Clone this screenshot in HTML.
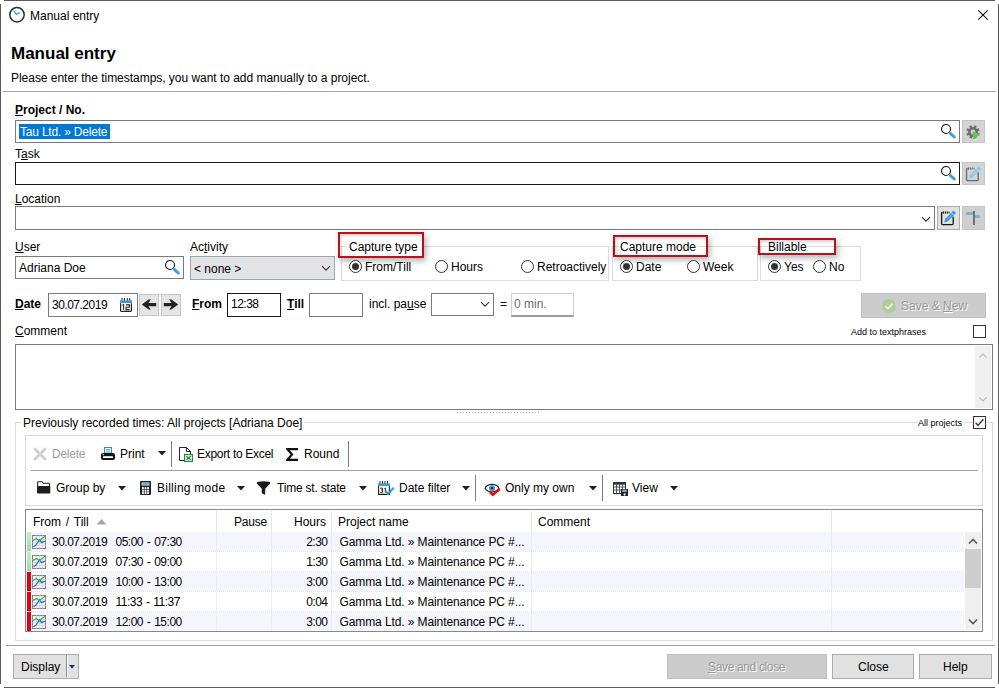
<!DOCTYPE html>
<html><head><meta charset="utf-8">
<style>
*{box-sizing:border-box;margin:0;padding:0}
html,body{width:999px;height:688px;overflow:hidden;background:#fff}
body{font-family:"Liberation Sans",sans-serif;font-size:12px;color:#000;position:relative}
.a{position:absolute}
.t{position:absolute;white-space:nowrap;line-height:14px}
.b{font-weight:bold}
u{text-decoration:underline;text-underline-offset:1px}
.inp{position:absolute;border:1px solid #7a7a7a;background:#fff}
.btn{position:absolute;border:1px solid #adadad;background:#e1e1e1}
.dis{position:absolute;border:1px solid #bfbfbf;background:#cccccc}
.grp{position:absolute;border:1px solid #dcdcdc}
.red{position:absolute;border:2px solid #b5121b;box-shadow:2px 3px 6px rgba(0,0,0,.3),inset 1px 2px 3px rgba(0,0,0,.18)}
.radio{position:absolute;width:13px;height:13px;border:1px solid #333;border-radius:50%;background:#fff}
.radio.on::after{content:"";position:absolute;left:2px;top:2px;width:7px;height:7px;border-radius:50%;background:#333}
</style></head><body>
<!-- window borders -->
<div class="a" style="left:4px;top:0;width:991px;height:1px;background:#5a5a5a"></div>
<div class="a" style="left:0;top:4px;width:1px;height:680px;background:#5a5a5a"></div>
<div class="a" style="left:998px;top:4px;width:1px;height:680px;background:#5a5a5a"></div>
<div class="a" style="left:4px;top:687px;width:991px;height:1px;background:#5a5a5a"></div>

<!-- title bar -->
<svg class="a" style="left:8px;top:6px" width="18" height="18" viewBox="0 0 18 18"><circle cx="9" cy="8.7" r="7.2" fill="none" stroke="#243238" stroke-width="1.5"/><path d="M5.6 4.6 L8.4 8.4 L11.8 6.6" fill="none" stroke="#40adb5" stroke-width="1.4"/></svg>
<div class="t" style="left:30px;top:9px">Manual entry</div>
<svg class="a" style="left:977px;top:9px" width="12" height="12" viewBox="0 0 12 12"><path d="M1.3 1.3L10.7 10.7M10.7 1.3L1.3 10.7" stroke="#111" stroke-width="1.1"/></svg>

<div class="t b" style="left:11px;top:44px;font-size:17px;line-height:19px">Manual entry</div>
<div class="t" style="left:11px;top:71px;letter-spacing:-0.03px">Please enter the timestamps, you want to add manually to a project.</div>
<div class="a" style="left:3px;top:91px;width:993px;height:1px;background:#a0a0a0"></div>

<!-- Project -->
<div class="t b" style="left:15px;top:103px"><u>P</u>roject / No.</div>
<div class="inp" style="left:15px;top:120px;width:945px;height:23px"></div>
<div class="a" style="left:19px;top:124px;width:91px;height:15px;background:#0078d7"></div>
<div class="t" style="left:20px;top:125px;color:#fff;letter-spacing:-0.2px">Tau Ltd. » Delete</div>

<!-- project buttons -->
<svg class="a" style="left:940px;top:123px" width="18" height="17" viewBox="0 0 18 17"><circle cx="6" cy="6" r="4.5" fill="none" stroke="#111" stroke-width="1.1"/><path d="M10.5 10.6 L14.3 14" stroke="#3b9ae0" stroke-width="2.9" stroke-linecap="round"/></svg>
<div class="dis" style="left:962px;top:120px;width:23px;height:23px;background:#d4d4d4;border-color:#c4c4c4"></div>
<svg class="a" style="left:962px;top:120px" width="23" height="23" viewBox="0 0 23 23"><path fill-rule="evenodd" fill="#6e6e6e" d="M11.00 7.10 L11.64 7.14 L12.38 5.24 L14.81 6.25 L13.98 8.11 L14.46 8.54 L14.89 9.02 L16.75 8.19 L17.76 10.62 L15.86 11.36 L15.90 12.00 L15.86 12.64 L17.76 13.38 L16.75 15.81 L14.89 14.98 L14.46 15.46 L13.98 15.89 L14.81 17.75 L12.38 18.76 L11.64 16.86 L11.00 16.90 L10.36 16.86 L9.62 18.76 L7.19 17.75 L8.02 15.89 L7.54 15.46 L7.11 14.98 L5.25 15.81 L4.24 13.38 L6.14 12.64 L6.10 12.00 L6.14 11.36 L4.24 10.62 L5.25 8.19 L7.11 9.02 L7.54 8.54 L8.02 8.11 L7.19 6.25 L9.62 5.24 L10.36 7.14Z M13.40 12.00 A2.4 2.4 0 1 0 8.60 12.00 A2.4 2.4 0 1 0 13.40 12.00Z"/><path d="M10.8 11 L10.8 19.2 L18.2 14.8Z" fill="#5ec95e"/></svg>

<!-- Task -->
<div class="t" style="left:15px;top:147px">T<u>a</u>sk</div>
<div class="inp" style="left:15px;top:162px;width:945px;height:23px;border-color:#1a1a1a"></div>
<svg class="a" style="left:940px;top:165px" width="18" height="17" viewBox="0 0 18 17"><circle cx="6" cy="6" r="4.5" fill="none" stroke="#111" stroke-width="1.1"/><path d="M10.5 10.6 L14.3 14" stroke="#3b9ae0" stroke-width="2.9" stroke-linecap="round"/></svg>
<div class="dis" style="left:962px;top:162px;width:23px;height:23px;background:#d4d4d4;border-color:#c4c4c4"></div>
<svg class="a" style="left:962px;top:162px" width="23" height="23" viewBox="0 0 23 23"><path d="M4.6 7 V17.8 Q4.6 18.6 5.4 18.6 H15.4 Q16.2 18.6 16.2 17.8 V10.5" fill="none" stroke="#6a6a6a" stroke-width="1.3"/><path d="M4.6 7 Q4.6 6.5 5.5 6.5" fill="none" stroke="#6a6a6a" stroke-width="1.3"/><g fill="#6a6a6a"><ellipse cx="6.4" cy="6.6" rx="0.6" ry="1.3"/><ellipse cx="8.3" cy="6.6" rx="0.6" ry="1.3"/><ellipse cx="10.2" cy="6.6" rx="0.6" ry="1.3"/><ellipse cx="12.1" cy="6.6" rx="0.55" ry="1.1"/></g><path d="M7.2 16.4L8.03 13.03L16.53 4.53L19.07 7.07L10.57 15.57Z" fill="#8cc3ea"/><path d="M10.7 12.9L14.27 9.33" stroke="#cfe5f5" stroke-width="0.9" stroke-dasharray="1 1"/><path d="M14.41 6.65L16.95 9.19" stroke="#cfe5f5" stroke-width="0.7"/></svg>

<!-- Location -->
<div class="t" style="left:15px;top:192px"><u>L</u>ocation</div>
<div class="inp" style="left:15px;top:206px;width:920px;height:24px"></div>
<svg class="a" style="left:921px;top:216px" width="10" height="7" viewBox="0 0 10 7"><path d="M1 1.2L5 5.2L9 1.2" fill="none" stroke="#333" stroke-width="1.1"/></svg>
<div class="btn" style="left:937px;top:206px;width:23px;height:24px"></div>
<svg class="a" style="left:937px;top:206px" width="23" height="23" viewBox="0 0 23 23"><path d="M4.6 7 V17.8 Q4.6 18.6 5.4 18.6 H15.4 Q16.2 18.6 16.2 17.8 V10.5" fill="none" stroke="#1a1a1a" stroke-width="1.3"/><path d="M4.6 7 Q4.6 6.5 5.5 6.5" fill="none" stroke="#1a1a1a" stroke-width="1.3"/><g fill="#1a1a1a"><ellipse cx="6.4" cy="6.6" rx="0.6" ry="1.3"/><ellipse cx="8.3" cy="6.6" rx="0.6" ry="1.3"/><ellipse cx="10.2" cy="6.6" rx="0.6" ry="1.3"/><ellipse cx="12.1" cy="6.6" rx="0.55" ry="1.1"/></g><path d="M7.2 16.4L8.03 13.03L16.53 4.53L19.07 7.07L10.57 15.57Z" fill="#3a9ad9"/><path d="M10.7 12.9L14.27 9.33" stroke="#e0f0fb" stroke-width="0.9" stroke-dasharray="1 1"/><path d="M14.41 6.65L16.95 9.19" stroke="#e0f0fb" stroke-width="0.7"/></svg>
<div class="dis" style="left:962px;top:206px;width:23px;height:24px;background:#cfcfcf;border-color:#c4c4c4"></div>
<svg class="a" style="left:962px;top:206px" width="23" height="23" viewBox="0 0 23 23"><rect x="11" y="5" width="2" height="14" fill="#707070"/><path d="M4.6 6H11V9H4.6L3.8 7.5Z" fill="#7ab3d9"/><path d="M13 9H17.4L18.2 10.5L17.4 12H13Z" fill="#7ab3d9"/></svg>

<!-- User -->
<div class="t" style="left:15px;top:240px"><u>U</u>ser</div>
<div class="inp" style="left:15px;top:256px;width:169px;height:23px"></div>
<div class="t" style="left:19px;top:261px">Adriana Doe</div>
<svg class="a" style="left:164px;top:259px" width="18" height="17" viewBox="0 0 18 17"><circle cx="6" cy="6" r="4.5" fill="none" stroke="#111" stroke-width="1.1"/><path d="M10.5 10.6 L14.3 14" stroke="#3b9ae0" stroke-width="2.9" stroke-linecap="round"/></svg>

<!-- Activity -->
<div class="t" style="left:190px;top:240px">Ac<u>t</u>ivity</div>
<div class="btn" style="left:190px;top:256px;width:145px;height:24px;background:#e3e3e6;border-color:#98a6b2"></div>
<div class="t" style="left:194px;top:262px">&lt; none &gt;</div>
<svg class="a" style="left:321px;top:265px" width="10" height="7" viewBox="0 0 10 7"><path d="M1 1.2L5 5.2L9 1.2" fill="none" stroke="#333" stroke-width="1.1"/></svg>

<!-- Capture type -->
<div class="grp" style="left:341px;top:246px;width:268px;height:35px"></div>
<div class="a" style="left:346px;top:240px;width:76px;height:12px;background:#fff"></div>
<div class="t" style="left:349px;top:240px">Capture type</div>
<div class="red" style="left:338px;top:232px;width:86px;height:26px"></div>
<div class="radio on" style="left:349px;top:260px"></div>
<div class="t" style="left:365px;top:260px">From/Till</div>
<div class="radio" style="left:435px;top:260px"></div>
<div class="t" style="left:451px;top:260px">Hours</div>
<div class="radio" style="left:521px;top:260px"></div>
<div class="t" style="left:537px;top:260px">Retroactively</div>

<!-- Capture mode -->
<div class="grp" style="left:612px;top:246px;width:146px;height:35px"></div>
<div class="t" style="left:619px;top:240px;background:#fff;padding:0 1px">Capture mode</div>
<div class="red" style="left:613px;top:235px;width:95px;height:22px"></div>
<div class="radio on" style="left:620px;top:260px"></div>
<div class="t" style="left:636px;top:260px">Date</div>
<div class="radio" style="left:687px;top:260px"></div>
<div class="t" style="left:703px;top:260px">Week</div>

<!-- Billable -->
<div class="grp" style="left:760px;top:246px;width:101px;height:35px"></div>
<div class="t" style="left:768px;top:240px;background:#fff">Billable</div>
<div class="red" style="left:758px;top:238px;width:78px;height:17px"></div>
<div class="radio on" style="left:768px;top:260px"></div>
<div class="t" style="left:784px;top:260px">Yes</div>
<div class="radio" style="left:813px;top:260px"></div>
<div class="t" style="left:829px;top:260px">No</div>

<!-- Date row -->
<div class="t b" style="left:15px;top:297px"><u>D</u>ate</div>
<div class="inp" style="left:48px;top:293px;width:90px;height:24px"></div>
<div class="t" style="left:52px;top:298px;letter-spacing:-0.5px">30.07.2019</div>
<svg class="a" style="left:120px;top:298px" width="12" height="14" viewBox="0 0 12 14"><g fill="#222"><rect x="1.5" y="0" width="1" height="3"/><rect x="4" y="0" width="1" height="3"/><rect x="6.8" y="0" width="1" height="3"/><rect x="9.3" y="0" width="1" height="3"/></g><rect x="0" y="2.4" width="12" height="2.8" fill="#3a9ad9"/><path d="M0.6 5.2V12.6Q0.6 13.4 1.4 13.4H10.6Q11.4 13.4 11.4 12.6V5.2" fill="#fff" stroke="#222" stroke-width="1.2"/><path d="M2.4 7.2L3.6 6.6V11.8M5.9 6.9H9.4V9.2H6V11.6H9.6" fill="none" stroke="#222" stroke-width="1.1"/></svg>
<div class="btn" style="left:139px;top:294px;width:20px;height:22px;background:#e5e5e5;border-color:#c4c4c4"></div>
<svg class="a" style="left:141px;top:299px" width="16" height="12" viewBox="0 0 16 12"><path d="M0.8 5.6L7.6 0.6H9.8L7.4 4H15.2V7.2H7.4L9.8 10.6H7.6Z" fill="#222"/></svg>
<div class="btn" style="left:161px;top:294px;width:20px;height:22px;background:#e5e5e5;border-color:#c4c4c4"></div>
<svg class="a" style="left:163px;top:299px" width="16" height="12" viewBox="0 0 16 12"><path d="M15.2 5.6L8.4 0.6H6.2L8.6 4H0.8V7.2H8.6L6.2 10.6H8.4Z" fill="#222"/></svg>
<div class="t b" style="left:192px;top:297px"><u>F</u>rom</div>
<div class="inp" style="left:227px;top:293px;width:54px;height:24px;border-color:#1a1a1a"></div>
<div class="t" style="left:231px;top:297px;letter-spacing:-0.5px">12:38</div>
<div class="t b" style="left:287px;top:297px"><u>T</u>ill</div>
<div class="inp" style="left:309px;top:293px;width:54px;height:24px"></div>
<div class="t" style="left:369px;top:297px">incl. pa<u>u</u>se</div>
<div class="inp" style="left:431px;top:293px;width:63px;height:23px"></div>
<svg class="a" style="left:480px;top:301px" width="10" height="7" viewBox="0 0 10 7"><path d="M1 1.2L5 5.2L9 1.2" fill="none" stroke="#333" stroke-width="1.1"/></svg>
<div class="t" style="left:500px;top:297px">=</div>
<div class="inp" style="left:511px;top:293px;width:63px;height:24px;border-color:#cfcfcf;border-bottom:2px solid #9a9a9a"></div>
<div class="t" style="left:514px;top:297px;color:#6d6d6d">0 min.</div>

<!-- Save & New -->
<div class="dis" style="left:861px;top:293px;width:125px;height:25px"></div>
<svg class="a" style="left:881px;top:298px" width="16" height="16" viewBox="0 0 16 16"><circle cx="8" cy="8" r="7" fill="#b1ca98"/><path d="M4.3 8.2L7 10.6L11.6 5.6" fill="none" stroke="#f0f0f0" stroke-width="1.6"/></svg>
<div class="t" style="left:901px;top:299px;color:#989898;text-shadow:1px 1px 0 #fff">Save &amp; <u>N</u>ew</div>

<!-- Comment -->
<div class="t" style="left:15px;top:324px"><u>C</u>omment</div>
<div class="t" style="left:851px;top:327px;font-size:9px;line-height:11px">Add to textphrases</div>
<div class="a" style="left:973px;top:325px;width:13px;height:13px;border:1px solid #333;background:#fff"></div>
<div class="inp" style="left:15px;top:344px;width:978px;height:66px"></div>
<div class="a" style="left:975px;top:346px;width:16px;height:62px;background:#f0f0f0"></div>
<svg class="a" style="left:979px;top:353px" width="8" height="5" viewBox="0 0 8 5"><path d="M0.5 4.5L4 1L7.5 4.5" fill="none" stroke="#bdbdbd" stroke-width="1.2"/></svg>
<svg class="a" style="left:979px;top:397px" width="8" height="5" viewBox="0 0 8 5"><path d="M0.5 0.5L4 4L7.5 0.5" fill="none" stroke="#bdbdbd" stroke-width="1.2"/></svg>
<div class="a" style="left:457px;top:412px;width:82px;height:1px;background:repeating-linear-gradient(90deg,#a8a8a8 0 1px,transparent 1px 3px)"></div>

<!-- Group box previously recorded -->
<div class="grp" style="left:15px;top:422px;width:978px;height:219px;border-color:#dcdcdc"></div>
<div class="t" style="left:21px;top:416px;background:#fff;padding:0 2px">Previously recorded times: All projects [Adriana Doe]</div>
<div class="t" style="left:918px;top:418px;font-size:9px;line-height:11px;background:#fff;padding:0 2px 0 0">All projects</div>
<div class="a" style="left:973px;top:416px;width:13px;height:13px;border:1px solid #333;background:#fff"></div>
<svg class="a" style="left:974px;top:417px" width="11" height="11" viewBox="0 0 11 11"><path d="M1.6 5.6L4 8.4L9.4 2.2" fill="none" stroke="#333" stroke-width="1.4"/></svg>

<!-- toolbar panel -->
<div class="a" style="left:25px;top:435px;width:958px;height:71px;border:1px solid #d9d9d9"></div>
<div class="a" style="left:31px;top:470px;width:947px;height:1px;background:#a0a0a0"></div>

<!-- toolbar row 1 -->
<svg class="a" style="left:33px;top:447px" width="14" height="14" viewBox="0 0 14 14"><path d="M2 2L12 12M12 2L2 12" stroke="#cdcdcd" stroke-width="2.6" stroke-linecap="round"/></svg>
<div class="t" style="left:52px;top:447px;color:#9c9c9c;letter-spacing:-0.25px">Delete</div>
<svg class="a" style="left:101px;top:447px" width="14" height="13" viewBox="0 0 14 13"><rect x="3.5" y="0.5" width="7" height="5.5" fill="#fff" stroke="#2a8ad8" stroke-width="1"/><path d="M5 2.4H9M5 4H9" stroke="#2a8ad8" stroke-width="0.8"/><rect x="0" y="6" width="14" height="7" rx="2" fill="#151515"/><rect x="2" y="9.2" width="10" height="1.8" fill="#fff"/><rect x="1.6" y="7.2" width="1.4" height="1" fill="#ddd"/></svg>
<div class="t" style="left:120px;top:447px">Print</div>
<svg class="a" style="left:158px;top:451px" width="9" height="5" viewBox="0 0 9 5"><path d="M0 0H8L4 4.5Z" fill="#222"/></svg>
<div class="a" style="left:171px;top:441px;width:1px;height:26px;background:#7a7a7a"></div>
<svg class="a" style="left:178px;top:446px" width="16" height="16" viewBox="0 0 16 16"><path d="M1.5 1.5H8.5L12.5 5.5V14.5H1.5Z" fill="#fff" stroke="#222" stroke-width="1"/><path d="M8.5 1.5V5.5H12.5" fill="none" stroke="#222" stroke-width="1"/><rect x="6" y="8" width="9" height="8" fill="#1f8a3b"/><rect x="7.2" y="9.2" width="6.6" height="5.6" fill="#fff"/><path d="M8.3 10.2L12.7 13.8M12.7 10.2L8.3 13.8" stroke="#1f8a3b" stroke-width="1.2"/></svg>
<div class="t" style="left:197px;top:447px;letter-spacing:-0.3px">Export to Excel</div>
<svg class="a" style="left:286px;top:448px" width="12" height="13" viewBox="0 0 12 13"><path d="M11 2.2V1.1H1.4L6 6.5L1.4 11.9H11V10.8" fill="none" stroke="#111" stroke-width="2.2" stroke-linejoin="miter"/></svg>
<div class="t" style="left:304px;top:447px">Round</div>
<div class="a" style="left:348px;top:441px;width:1px;height:26px;background:#7a7a7a"></div>

<!-- toolbar row 2 -->
<svg class="a" style="left:37px;top:481px" width="14" height="13" viewBox="0 0 14 13"><path d="M0.6 12V1.5Q0.6 0.7 1.4 0.7H5L6.4 2.3H11.8Q12.5 2.3 12.5 3V5.2" fill="#fff" stroke="#222" stroke-width="1.1"/><path d="M0.6 12.6V5.6Q0.6 4.9 1.3 4.9H12.6Q13.3 4.9 13.3 5.6V11.9Q13.3 12.6 12.6 12.6Z" fill="#1e1e1e"/></svg>
<div class="t" style="left:56px;top:481px">Group by</div>
<svg class="a" style="left:118px;top:486px" width="9" height="5" viewBox="0 0 9 5"><path d="M0 0H8L4 4.5Z" fill="#222"/></svg>
<svg class="a" style="left:140px;top:481px" width="11" height="14" viewBox="0 0 11 14"><rect x="0" y="0" width="11" height="14" rx="1" fill="#222"/><rect x="1.6" y="1.5" width="7.8" height="3" fill="#fff"/><rect x="2.2" y="2.1" width="6.6" height="1.8" fill="#5aa9e6"/><g fill="#fff"><rect x="2" y="6.1" width="1.9" height="1.9"/><rect x="4.55" y="6.1" width="1.9" height="1.9"/><rect x="7.1" y="6.1" width="1.9" height="1.9"/><rect x="2" y="8.7" width="1.9" height="1.9"/><rect x="4.55" y="8.7" width="1.9" height="1.9"/><rect x="7.1" y="8.7" width="1.9" height="1.9"/><rect x="2" y="11.1" width="1.9" height="1.9"/><rect x="4.55" y="11.1" width="1.9" height="1.9"/><rect x="7.1" y="11.1" width="1.9" height="1.9"/></g></svg>
<div class="t" style="left:157px;top:481px;letter-spacing:0.25px">Billing mode</div>
<svg class="a" style="left:237px;top:486px" width="9" height="5" viewBox="0 0 9 5"><path d="M0 0H8L4 4.5Z" fill="#222"/></svg>
<svg class="a" style="left:256px;top:481px" width="15" height="14" viewBox="0 0 15 14"><path d="M0.6 2.2Q0.6 0.3 7.5 0.3Q14.4 0.3 14.4 2.2L9.2 7.8V13.8L5.8 12.2V7.8Z" fill="#1a1a1a"/></svg>
<div class="t" style="left:277px;top:481px;letter-spacing:-0.2px">Time st. state</div>
<svg class="a" style="left:359px;top:486px" width="9" height="5" viewBox="0 0 9 5"><path d="M0 0H8L4 4.5Z" fill="#222"/></svg>
<svg class="a" style="left:377px;top:480px" width="18" height="16" viewBox="0 0 18 16"><g fill="#222"><rect x="2.5" y="1" width="1" height="3"/><rect x="5" y="1" width="1" height="3"/><rect x="7.5" y="1" width="1" height="3"/><rect x="10" y="1" width="1" height="3"/></g><rect x="1" y="3.4" width="12" height="2.6" fill="#3a9ad9"/><path d="M1.6 6V14.4H12.4V6" fill="#fff" stroke="#222" stroke-width="1.1"/><path d="M3.2 8.2H5.6V10H4.2M5.6 10V12.4H3.2M7.4 8.6L8.4 8.1V12.6" fill="none" stroke="#222" stroke-width="1"/><path d="M8.6 11.2L11.2 13.8L16.8 7.6" fill="none" stroke="#3a9ad9" stroke-width="2.1"/></svg>
<div class="t" style="left:399px;top:481px">Date filter</div>
<svg class="a" style="left:462px;top:486px" width="9" height="5" viewBox="0 0 9 5"><path d="M0 0H8L4 4.5Z" fill="#222"/></svg>
<div class="a" style="left:475px;top:475px;width:1px;height:26px;background:#7a7a7a"></div>
<svg class="a" style="left:484px;top:481px" width="18" height="16" viewBox="0 0 18 16"><path d="M1 7.2C4 2.2 12 2.2 15 7.2C12 12.2 4 12.2 1 7.2Z" fill="#fff" stroke="#222" stroke-width="1.2"/><circle cx="8" cy="7.2" r="3" fill="#3a9ad9"/><circle cx="8" cy="7.2" r="1.1" fill="#1a1a1a"/><path d="M6 11L8.8 13.8L15.8 8" fill="none" stroke="#e0101a" stroke-width="2.6"/></svg>
<div class="t" style="left:505px;top:481px">Only my own</div>
<svg class="a" style="left:589px;top:486px" width="9" height="5" viewBox="0 0 9 5"><path d="M0 0H8L4 4.5Z" fill="#222"/></svg>
<div class="a" style="left:602px;top:475px;width:1px;height:26px;background:#7a7a7a"></div>
<svg class="a" style="left:613px;top:482px" width="15" height="14" viewBox="0 0 15 14"><rect x="0.5" y="0.5" width="12" height="11" fill="#fff" stroke="#333"/><rect x="0.5" y="0.5" width="12" height="2.2" fill="#333"/><path d="M3.5 0.5V11.5M6.5 0.5V11.5M9.5 0.5V11.5M0.5 5H12.5M0.5 8H12.5" stroke="#444" stroke-width="0.9"/><rect x="8" y="7" width="7" height="7" fill="#1e1e1e"/><rect x="9.2" y="7.6" width="4.6" height="2.4" fill="#6ab0e8"/><rect x="10.6" y="11.4" width="2" height="2" fill="#fff"/></svg>
<div class="t" style="left:632px;top:481px">View</div>
<svg class="a" style="left:670px;top:486px" width="9" height="5" viewBox="0 0 9 5"><path d="M0 0H8L4 4.5Z" fill="#222"/></svg>

<!-- grid -->
<div class="a" style="left:25px;top:509px;width:958px;height:123px;border:1px solid #828790;background:#fff"></div>
<div class="t" style="left:33px;top:515px;word-spacing:1.5px">From / Till</div>
<svg class="a" style="left:96px;top:518px" width="11" height="7" viewBox="0 0 11 7"><path d="M0.5 6.5L5.5 1L10.5 6.5Z" fill="#a6a6a6"/></svg>
<div class="a" style="left:216px;top:511px;width:1px;height:21px;background:#e5e5e5"></div>
<div class="a" style="left:271px;top:511px;width:1px;height:21px;background:#e5e5e5"></div>
<div class="a" style="left:331px;top:511px;width:1px;height:21px;background:#e5e5e5"></div>
<div class="a" style="left:531px;top:511px;width:1px;height:21px;background:#e5e5e5"></div>
<div class="a" style="left:831px;top:511px;width:1px;height:21px;background:#e5e5e5"></div>
<div class="t" style="left:227px;top:515px;width:40px;text-align:right;letter-spacing:-0.2px">Pause</div>
<div class="t" style="left:286px;top:515px;width:40px;text-align:right">Hours</div>
<div class="t" style="left:338px;top:515px">Project name</div>
<div class="t" style="left:538px;top:515px">Comment</div>
<div class="a" style="left:26px;top:532px;width:938px;height:19px;background:#f5f5fd"></div>
<div class="a" style="left:26px;top:551px;width:938px;height:1px;border-top:1px dotted #e6e6e6"></div>
<div class="a" style="left:27px;top:532px;width:4px;height:19px;background:linear-gradient(180deg,#c8ecc8,#a0dca0)"></div>
<svg class="a" style="left:32px;top:535px" width="14" height="14" viewBox="0 0 14 14"><rect x="0.5" y="0.5" width="13" height="13" fill="#f4f4fa" stroke="#7c8494"/><path d="M0.5 4.5H13.5M0.5 7.5H13.5M0.5 10.5H13.5M4.5 0.5V13.5M7.5 0.5V13.5M10.5 0.5V13.5" stroke="#d0d4e0" stroke-width="0.8"/><path d="M1.3 11.6L3.5 10.6L5.5 8L7.4 4.8L9.6 7.6L13 6" fill="none" stroke="#2a6ed8" stroke-width="1.3"/><path d="M1 5.6L4.5 3.4L7 5.8L10 3.6L13.2 1" fill="none" stroke="#36b43a" stroke-width="1.2"/></svg>
<div class="t" style="left:52px;top:535px;letter-spacing:-0.5px">30.07.2019</div>
<div class="t" style="left:115.5px;top:535px;letter-spacing:-0.5px;word-spacing:1px">05:00 - 07:30</div>
<div class="t" style="left:299px;top:535px;width:28.5px;text-align:right;letter-spacing:-0.5px">2:30</div>
<div class="t" style="left:339.5px;top:535px;letter-spacing:-0.1px">Gamma Ltd. » Maintenance PC #...</div>
<div class="a" style="left:26px;top:552px;width:938px;height:19px;background:#ffffff"></div>
<div class="a" style="left:26px;top:571px;width:938px;height:1px;border-top:1px dotted #e6e6e6"></div>
<div class="a" style="left:27px;top:552px;width:4px;height:19px;background:linear-gradient(180deg,#c8ecc8,#a0dca0)"></div>
<svg class="a" style="left:32px;top:555px" width="14" height="14" viewBox="0 0 14 14"><rect x="0.5" y="0.5" width="13" height="13" fill="#f4f4fa" stroke="#7c8494"/><path d="M0.5 4.5H13.5M0.5 7.5H13.5M0.5 10.5H13.5M4.5 0.5V13.5M7.5 0.5V13.5M10.5 0.5V13.5" stroke="#d0d4e0" stroke-width="0.8"/><path d="M1.3 11.6L3.5 10.6L5.5 8L7.4 4.8L9.6 7.6L13 6" fill="none" stroke="#2a6ed8" stroke-width="1.3"/><path d="M1 5.6L4.5 3.4L7 5.8L10 3.6L13.2 1" fill="none" stroke="#36b43a" stroke-width="1.2"/></svg>
<div class="t" style="left:52px;top:555px;letter-spacing:-0.5px">30.07.2019</div>
<div class="t" style="left:115.5px;top:555px;letter-spacing:-0.5px;word-spacing:1px">07:30 - 09:00</div>
<div class="t" style="left:299px;top:555px;width:28.5px;text-align:right;letter-spacing:-0.5px">1:30</div>
<div class="t" style="left:339.5px;top:555px;letter-spacing:-0.1px">Gamma Ltd. » Maintenance PC #...</div>
<div class="a" style="left:26px;top:572px;width:938px;height:19px;background:#f5f5fd"></div>
<div class="a" style="left:26px;top:591px;width:938px;height:1px;border-top:1px dotted #e6e6e6"></div>
<div class="a" style="left:27px;top:572px;width:4px;height:19px;background:#e00010"></div>
<svg class="a" style="left:32px;top:575px" width="14" height="14" viewBox="0 0 14 14"><rect x="0.5" y="0.5" width="13" height="13" fill="#f4f4fa" stroke="#7c8494"/><path d="M0.5 4.5H13.5M0.5 7.5H13.5M0.5 10.5H13.5M4.5 0.5V13.5M7.5 0.5V13.5M10.5 0.5V13.5" stroke="#d0d4e0" stroke-width="0.8"/><path d="M1.3 11.6L3.5 10.6L5.5 8L7.4 4.8L9.6 7.6L13 6" fill="none" stroke="#2a6ed8" stroke-width="1.3"/><path d="M1 5.6L4.5 3.4L7 5.8L10 3.6L13.2 1" fill="none" stroke="#36b43a" stroke-width="1.2"/></svg>
<div class="t" style="left:52px;top:575px;letter-spacing:-0.5px">30.07.2019</div>
<div class="t" style="left:115.5px;top:575px;letter-spacing:-0.5px;word-spacing:1px">10:00 - 13:00</div>
<div class="t" style="left:299px;top:575px;width:28.5px;text-align:right;letter-spacing:-0.5px">3:00</div>
<div class="t" style="left:339.5px;top:575px;letter-spacing:-0.1px">Gamma Ltd. » Maintenance PC #...</div>
<div class="a" style="left:26px;top:592px;width:938px;height:19px;background:#ffffff"></div>
<div class="a" style="left:26px;top:611px;width:938px;height:1px;border-top:1px dotted #e6e6e6"></div>
<div class="a" style="left:27px;top:592px;width:4px;height:19px;background:#e00010"></div>
<svg class="a" style="left:32px;top:595px" width="14" height="14" viewBox="0 0 14 14"><rect x="0.5" y="0.5" width="13" height="13" fill="#f4f4fa" stroke="#7c8494"/><path d="M0.5 4.5H13.5M0.5 7.5H13.5M0.5 10.5H13.5M4.5 0.5V13.5M7.5 0.5V13.5M10.5 0.5V13.5" stroke="#d0d4e0" stroke-width="0.8"/><path d="M1.3 11.6L3.5 10.6L5.5 8L7.4 4.8L9.6 7.6L13 6" fill="none" stroke="#2a6ed8" stroke-width="1.3"/><path d="M1 5.6L4.5 3.4L7 5.8L10 3.6L13.2 1" fill="none" stroke="#36b43a" stroke-width="1.2"/></svg>
<div class="t" style="left:52px;top:595px;letter-spacing:-0.5px">30.07.2019</div>
<div class="t" style="left:115.5px;top:595px;letter-spacing:-0.5px;word-spacing:1px">11:33 - 11:37</div>
<div class="t" style="left:299px;top:595px;width:28.5px;text-align:right;letter-spacing:-0.5px">0:04</div>
<div class="t" style="left:339.5px;top:595px;letter-spacing:-0.1px">Gamma Ltd. » Maintenance PC #...</div>
<div class="a" style="left:26px;top:612px;width:938px;height:19px;background:#f5f5fd"></div>
<div class="a" style="left:27px;top:612px;width:4px;height:19px;background:#e00010"></div>
<svg class="a" style="left:32px;top:615px" width="14" height="14" viewBox="0 0 14 14"><rect x="0.5" y="0.5" width="13" height="13" fill="#f4f4fa" stroke="#7c8494"/><path d="M0.5 4.5H13.5M0.5 7.5H13.5M0.5 10.5H13.5M4.5 0.5V13.5M7.5 0.5V13.5M10.5 0.5V13.5" stroke="#d0d4e0" stroke-width="0.8"/><path d="M1.3 11.6L3.5 10.6L5.5 8L7.4 4.8L9.6 7.6L13 6" fill="none" stroke="#2a6ed8" stroke-width="1.3"/><path d="M1 5.6L4.5 3.4L7 5.8L10 3.6L13.2 1" fill="none" stroke="#36b43a" stroke-width="1.2"/></svg>
<div class="t" style="left:52px;top:615px;letter-spacing:-0.5px">30.07.2019</div>
<div class="t" style="left:115.5px;top:615px;letter-spacing:-0.5px;word-spacing:1px">12:00 - 15:00</div>
<div class="t" style="left:299px;top:615px;width:28.5px;text-align:right;letter-spacing:-0.5px">3:00</div>
<div class="t" style="left:339.5px;top:615px;letter-spacing:-0.1px">Gamma Ltd. » Maintenance PC #...</div>
<div class="a" style="left:216px;top:532px;width:1px;height:99px;border-left:1px dotted #e3e3e3"></div>
<div class="a" style="left:271px;top:532px;width:1px;height:99px;border-left:1px dotted #e3e3e3"></div>
<div class="a" style="left:331px;top:532px;width:1px;height:99px;border-left:1px dotted #e3e3e3"></div>
<div class="a" style="left:531px;top:532px;width:1px;height:99px;border-left:1px dotted #e3e3e3"></div>
<div class="a" style="left:831px;top:532px;width:1px;height:99px;border-left:1px dotted #e3e3e3"></div>

<div class="a" style="left:965px;top:532px;width:16px;height:98px;background:#f0f0f0"></div>
<div class="a" style="left:965px;top:549px;width:16px;height:39px;background:#cdcdcd"></div>
<svg class="a" style="left:968px;top:538px" width="10" height="7" viewBox="0 0 10 7"><path d="M1 5.5L5 1.5L9 5.5" fill="none" stroke="#555" stroke-width="1.6"/></svg>
<svg class="a" style="left:968px;top:618px" width="10" height="7" viewBox="0 0 10 7"><path d="M1 1.5L5 5.5L9 1.5" fill="none" stroke="#555" stroke-width="1.6"/></svg>

<!-- footer -->
<div class="a" style="left:6px;top:645px;width:989px;height:1px;background:#a0a0a0"></div>
<div class="btn" style="left:13px;top:654px;width:66px;height:25px"></div>
<div class="a" style="left:66px;top:655px;width:1px;height:22px;background:#8a8a8a"></div>
<div class="a" style="left:67px;top:655px;width:1px;height:22px;background:#fff"></div>
<div class="t" style="left:21px;top:660px">Display</div>
<svg class="a" style="left:69px;top:665px" width="7" height="4" viewBox="0 0 7 4"><path d="M0 0H6L3 3.5Z" fill="#1a237e"/></svg>
<div class="dis" style="left:667px;top:654px;width:160px;height:25px"></div>
<div class="t" style="left:708px;top:660px;color:#989898;text-shadow:1px 1px 0 #fff;letter-spacing:-0.35px"><u>S</u>ave and close</div>
<div class="btn" style="left:832px;top:654px;width:82px;height:25px"></div>
<div class="t" style="left:858px;top:660px">Close</div>
<div class="btn" style="left:919px;top:654px;width:73px;height:25px"></div>
<div class="t" style="left:943px;top:660px">Help</div>

</body></html>
